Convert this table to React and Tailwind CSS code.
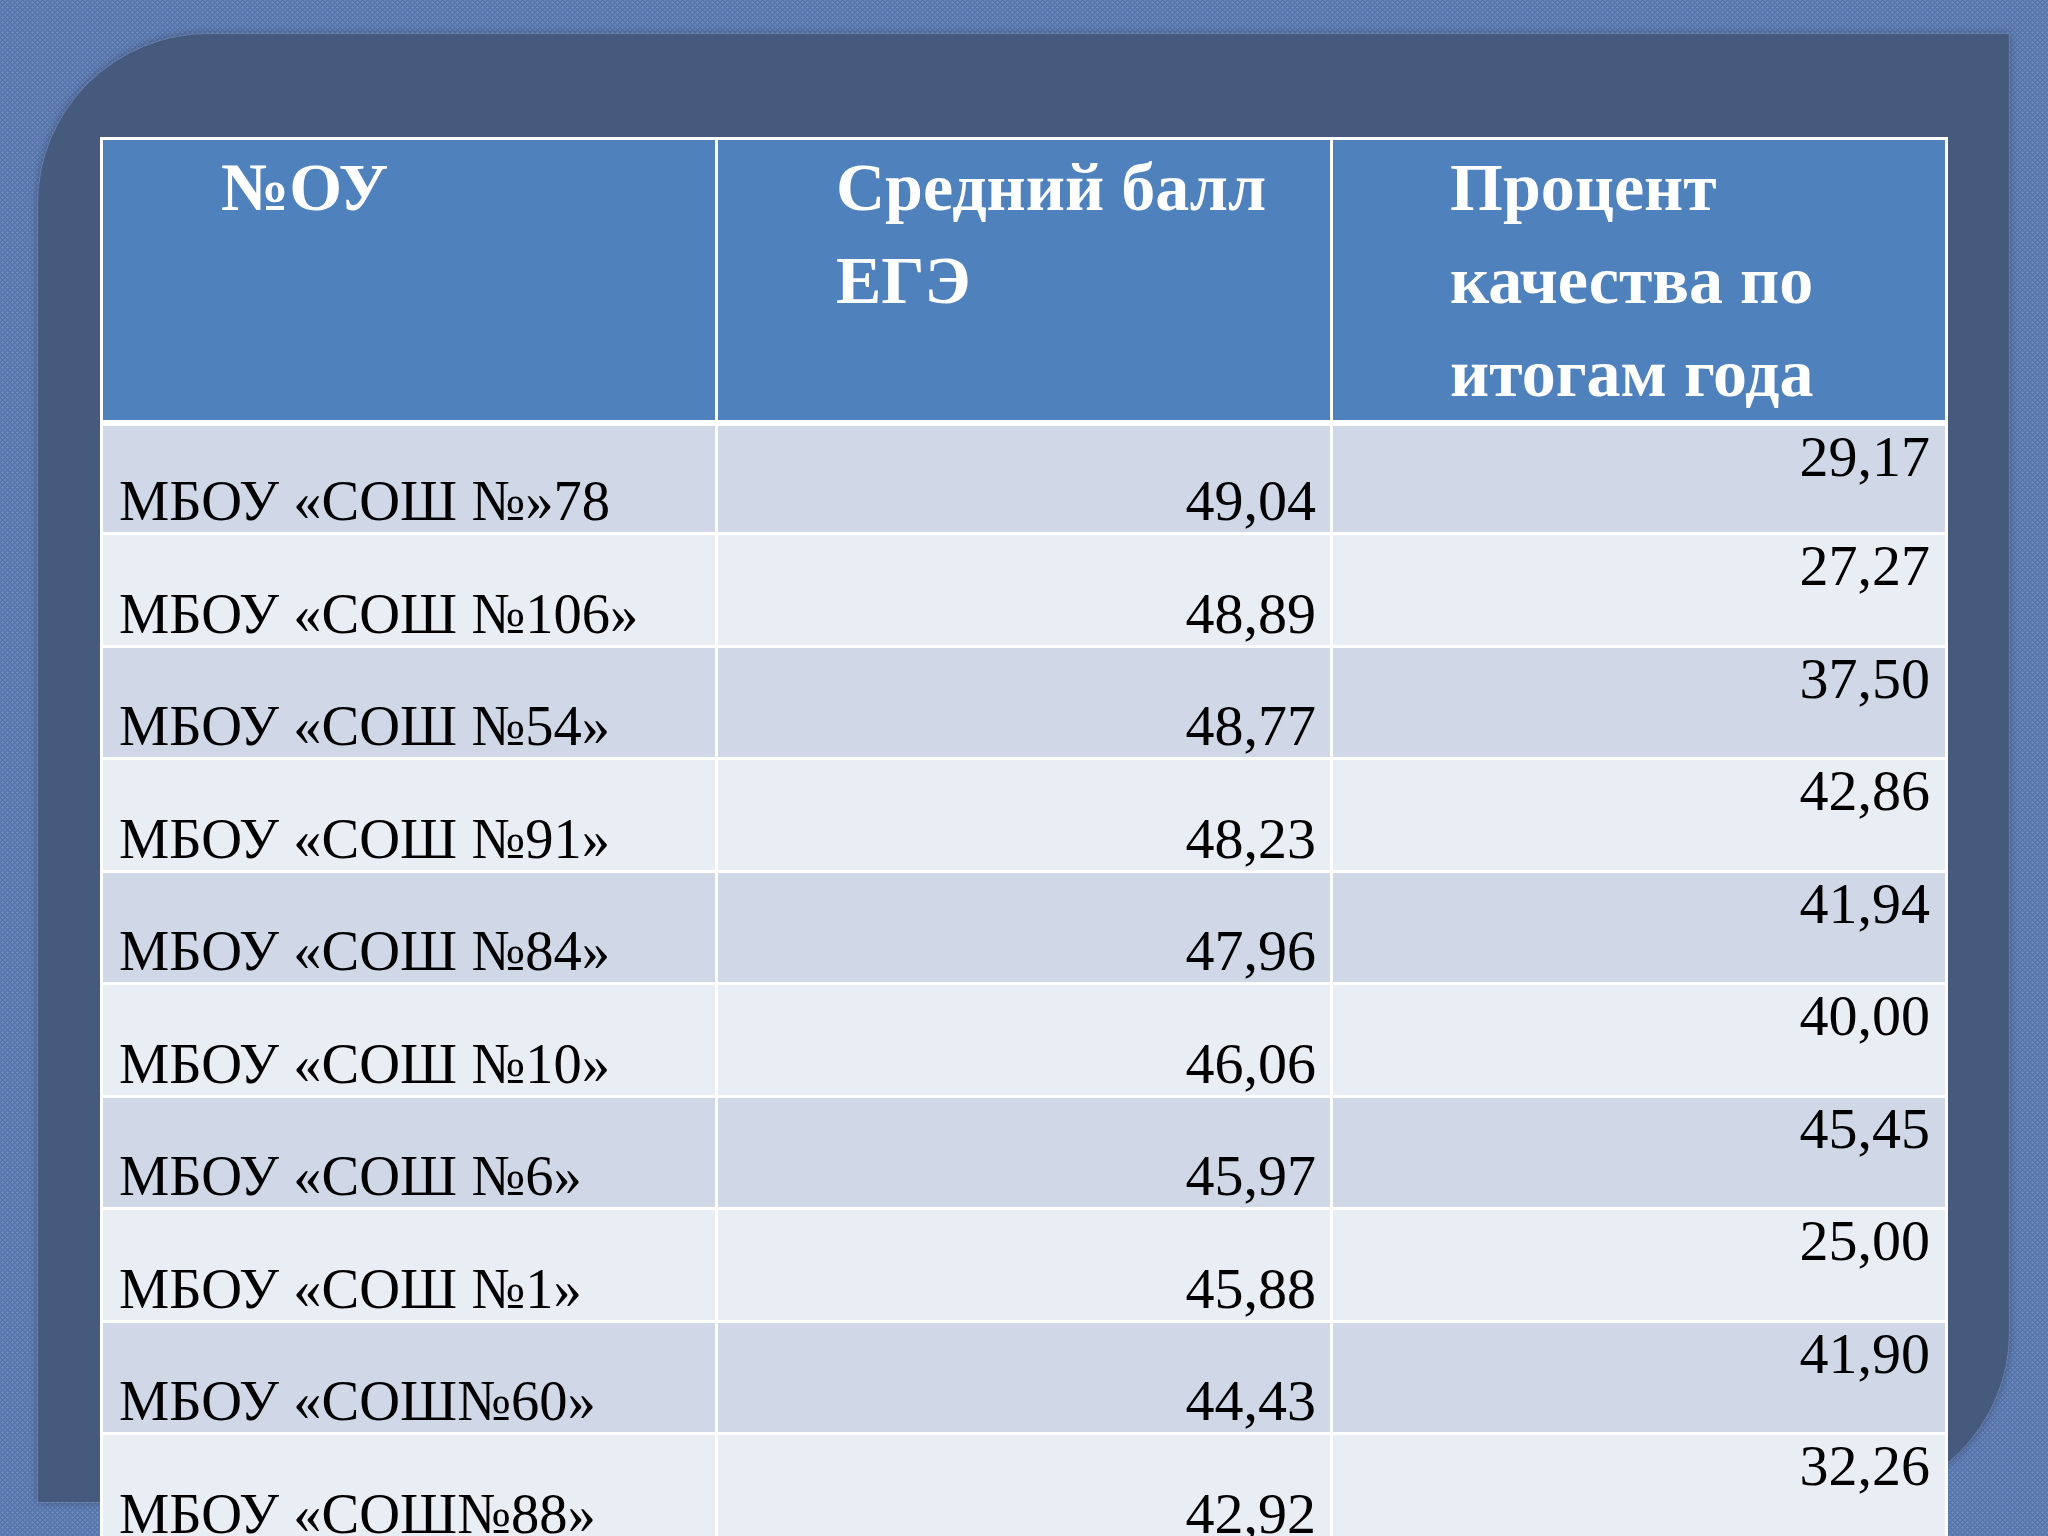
import React from "react";

const rows = [
  ["МБОУ «СОШ №»78", "49,04", "29,17"],
  ["МБОУ «СОШ №106»", "48,89", "27,27"],
  ["МБОУ «СОШ №54»", "48,77", "37,50"],
  ["МБОУ «СОШ №91»", "48,23", "42,86"],
  ["МБОУ «СОШ №84»", "47,96", "41,94"],
  ["МБОУ «СОШ №10»", "46,06", "40,00"],
  ["МБОУ «СОШ №6»", "45,97", "45,45"],
  ["МБОУ «СОШ №1»", "45,88", "25,00"],
  ["МБОУ «СОШ№60»", "44,43", "41,90"],
  ["МБОУ «СОШ№88»", "42,92", "32,26"],
];

export default function App() {
  return (
    <div
      className="w-[2048px] h-[1536px] overflow-hidden bg-[#5673a8] bg-[image:radial-gradient(circle,#6c8ac0_35%,transparent_40%),radial-gradient(circle,#6c8ac0_35%,transparent_40%)] bg-[length:5px_5px] bg-[position:0_0,2.5px_2.5px] pt-[34px] pl-[38px]"
      style={{ fontFamily: '"Liberation Serif", "Times New Roman", serif' }}
    >
      <div className="w-[1971px] h-[1468px] bg-[#465a7d] rounded-tl-[170px] rounded-br-[170px] shadow-[0_0_0_1px_rgba(130,155,200,0.45),0_0_10px_rgba(0,0,0,0.35)] pt-[103px] pl-[62px]">
        <div className="w-[1848px] bg-white pt-[3px] px-[3px] flex flex-col">
          <div className="grid grid-cols-3 gap-x-[3px] h-[277px]">
            <div className="bg-[#4f81bd] pl-[118px] pt-[1px] text-white font-bold text-[68px] leading-[93px]">
              №ОУ
            </div>
            <div className="bg-[#4f81bd] pl-[118px] pt-[1px] text-white font-bold text-[68px] leading-[93px]">
              Средний балл
              <br />
              ЕГЭ
            </div>
            <div className="bg-[#4f81bd] pl-[117px] pt-[1px] text-white font-bold text-[68px] leading-[93px]">
              Процент
              <br />
              качества по
              <br />
              итогам года
            </div>
          </div>
          <div className="mt-[9px] flex flex-col gap-y-[3px]">
            {rows.map((r, i) => {
              const bg = i % 2 === 0 ? "bg-[#d0d8e8]" : "bg-[#e9edf4]";
              const h = i === 0 ? "h-[106px]" : "h-[109.5px]";
              return (
                <div key={i} className={`grid grid-cols-3 gap-x-[3px] ${h}`}>
                  <div className={`${bg} flex items-end pl-[16px] pb-[2px] text-black text-[58px] leading-none whitespace-nowrap`}>
                    <span className="inline-block origin-left scale-x-[0.975]">{r[0]}</span>
                  </div>
                  <div className={`${bg} flex items-end justify-end pr-[14px] pb-[2px] text-black text-[58px] leading-none`}>
                    {r[1]}
                  </div>
                  <div className={`${bg} flex items-start justify-end pr-[15px] pt-[2px] text-black text-[58px] leading-none`}>
                    {r[2]}
                  </div>
                </div>
              );
            })}
          </div>
        </div>
      </div>
    </div>
  );
}
